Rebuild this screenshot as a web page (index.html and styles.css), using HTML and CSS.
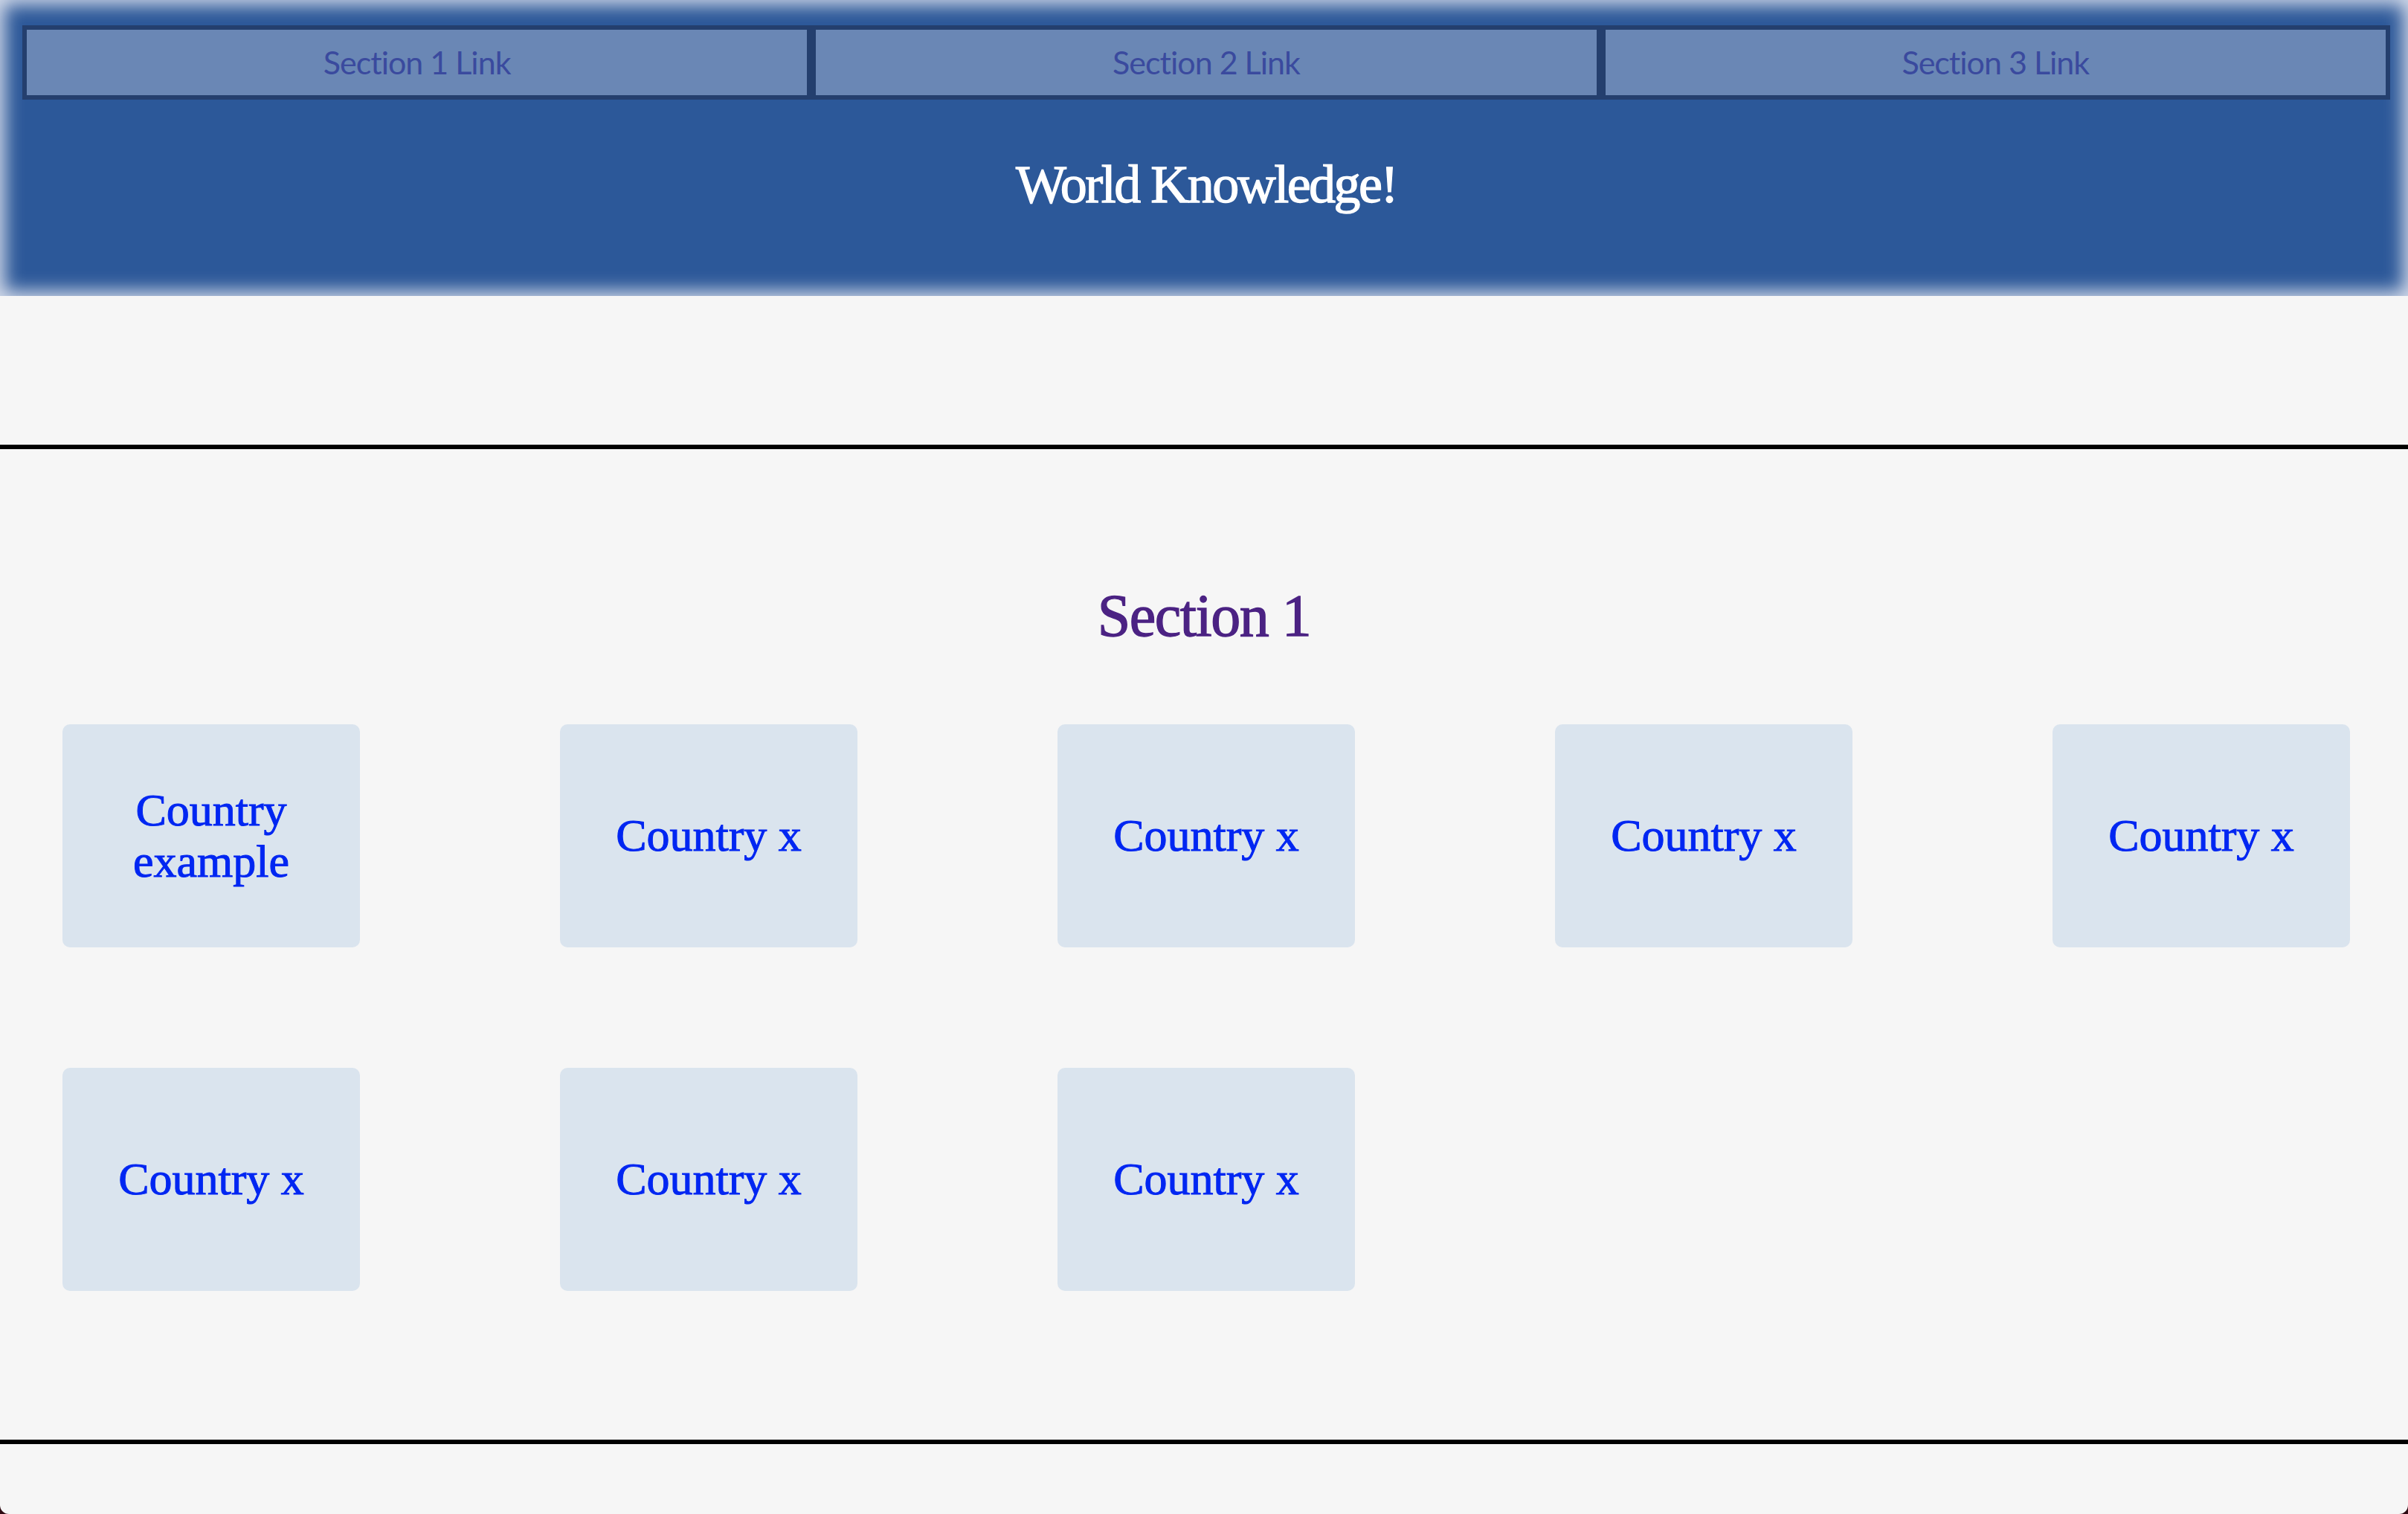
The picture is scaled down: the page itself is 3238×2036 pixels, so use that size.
FILE: index.html
```html
<!DOCTYPE html>
<html lang="en">
<head>
<meta charset="utf-8">
<title>World Knowledge!</title>
<link rel="stylesheet" href="styles.css">
</head>
<body>
  <header class="site-header">
    <nav class="nav">
      <a class="nav-link" href="#section1">Section 1 Link</a>
      <a class="nav-link" href="#section2">Section 2 Link</a>
      <a class="nav-link" href="#section3">Section 3 Link</a>
    </nav>
    <h1 class="site-title">World Knowledge!</h1>
  </header>

  <main>
    <section class="section" id="section1">
      <h2 class="section-title">Section 1</h2>
      <div class="card-grid">
        <a class="card" href="#">Country example</a>
        <a class="card" href="#">Country x</a>
        <a class="card" href="#">Country x</a>
        <a class="card" href="#">Country x</a>
        <a class="card" href="#">Country x</a>
        <a class="card" href="#">Country x</a>
        <a class="card" href="#">Country x</a>
        <a class="card" href="#">Country x</a>
      </div>
    </section>
  </main>
</body>
</html>
```

FILE: styles.css
```css
html {
  background: #2e0a12;
}

body {
  margin: 0;
  min-height: 100vh;
  background: #f6f6f6;
  border-radius: 0 0 12px 12px;
  font-family: "Liberation Serif", "Times New Roman", serif;
}

.site-header {
  background: #2c5899;
  padding: 34px 24px 114px 30px;
  box-shadow: inset 0 0 24px 6px rgba(246, 246, 250, 0.85);
}

.nav {
  display: flex;
}

.nav-link {
  flex: 1;
  height: 88px;
  line-height: 88px;
  border: 6px solid #243f6e;
  background: #6a87b5;
  color: #3a4a9e;
  text-align: center;
  text-decoration: none;
  font-family: Lato, "Liberation Sans", sans-serif;
  font-size: 43px;
  letter-spacing: -1px;
}

.site-title {
  margin: 78px 0 0;
  height: 72px;
  font-size: 72px;
  line-height: 72px;
  font-weight: normal;
  letter-spacing: -2.5px;
  color: #ffffff;
  text-align: center;
  -webkit-text-stroke: 1.3px #ffffff;
}

.section {
  margin-top: 200px;
  border-top: 6px solid #000;
  border-bottom: 6px solid #000;
  padding: 184px 0 200px;
}

.section-title {
  margin: 0 0 106px;
  font-size: 80px;
  line-height: 80px;
  font-weight: normal;
  letter-spacing: -1.5px;
  color: #4b2283;
  text-align: center;
  -webkit-text-stroke: 1.3px #4b2283;
}

.card-grid {
  display: grid;
  grid-template-columns: repeat(5, 400px);
  grid-auto-rows: 300px;
  column-gap: 269px;
  row-gap: 162px;
  padding-left: 84px;
}

.card {
  display: flex;
  align-items: center;
  justify-content: center;
  padding: 0 20px;
  background: #dae4ee;
  border-radius: 10px;
  color: #0026f2;
  text-decoration: none;
  text-align: center;
  font-size: 62px;
  line-height: 1.12;
  -webkit-text-stroke: 1px #0026f2;
}
```
